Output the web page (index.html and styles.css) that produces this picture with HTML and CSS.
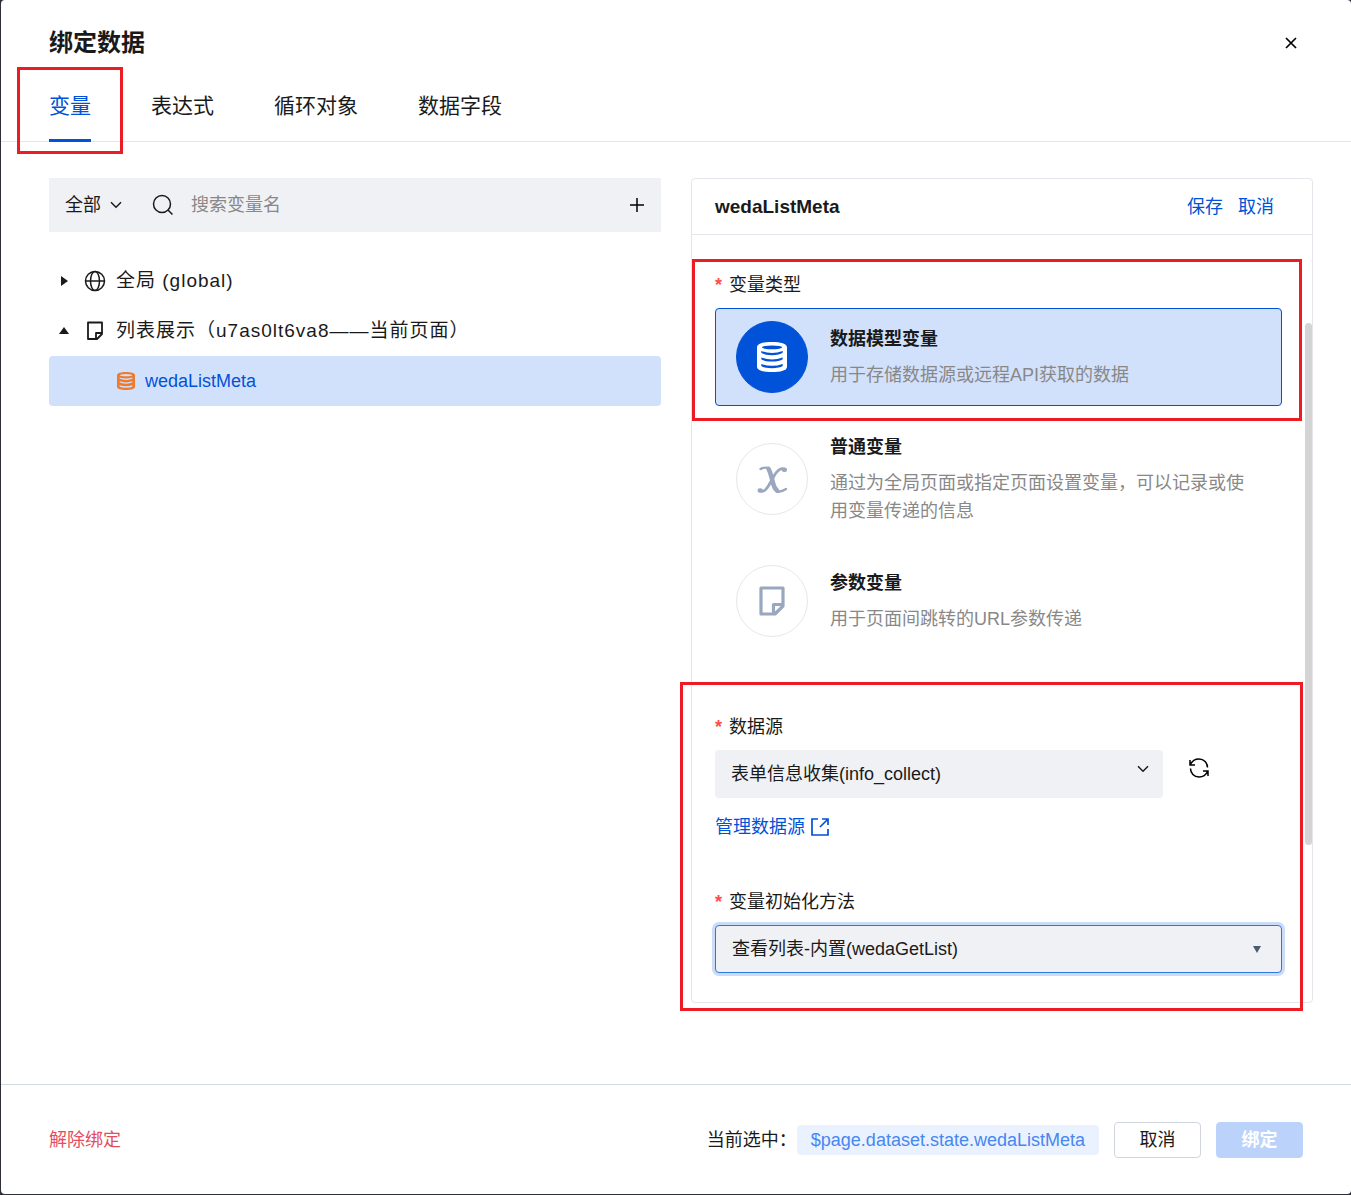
FILE: index.html
```html
<!DOCTYPE html>
<html lang="zh-CN">
<head>
    <meta charset="UTF-8">
    <meta name="viewport" content="width=device-width, initial-scale=1.0">
    <title>绑定数据</title>
    <link rel="stylesheet" href="styles.css">
</head>
<body>

    <!-- Shared icons -->
    <svg class="sprite" aria-hidden="true">
        <symbol id="icon-down" viewBox="0 0 12 8">
            <path d="M1 1.2l5 5 5-5" fill="none" stroke="currentColor" stroke-width="1.5" />
        </symbol>
        <symbol id="icon-db" viewBox="0 0 28 28">
            <path d="M14 0C6 0 0 1.500 0 5v18c0 3.500 6 5 14 5s14-1.500 14-5V5c0-3.500-6-5-14-5z" fill="currentColor" />
            <g class="db-lines">
                <ellipse cx="14" cy="5" rx="9.500" ry="1.700" />
                <path d="M4 8.500q10 3.500 20 0v1.500q-3 2.300-10 2.300T4 10z" />
                <path d="M4 14.500q10 3.500 20 0v1.500q-3 2.300-10 2.300T4 16z" />
                <path d="M4 20.500q10 3.500 20 0v2q-3 2-10 2T4 22.500z" />
            </g>
        </symbol>
        <symbol id="icon-page" viewBox="0 0 26 30">
            <path d="M2 2h22v18l-8 8H2zM24 18.500H14.500V28" fill="none" stroke="currentColor" stroke-width="3.200" stroke-linejoin="round" />
        </symbol>
    </svg>

    <div class="dialog">
        <header class="dialog-header">
            <h1>绑定数据</h1>
            <button type="button" class="icon-btn" aria-label="关闭">
                <svg width="12" height="12" viewBox="0 0 12 12"><path d="M1 1l10 10M11 1L1 11" stroke="currentColor" stroke-width="1.700" /></svg>
            </button>
        </header>

        <nav class="tabs">
            <a href="#" class="tab active">变量<span class="marker marker-tab"></span></a>
            <a href="#" class="tab">表达式</a>
            <a href="#" class="tab">循环对象</a>
            <a href="#" class="tab">数据字段</a>
        </nav>

        <main class="dialog-body">
            <!-- Variable list -->
            <section class="variables">
                <div class="search-bar">
                    <div class="scope">
                        <select aria-label="范围">
                            <option>全部</option>
                        </select>
                        <svg width="12" height="8"><use href="#icon-down" /></svg>
                    </div>
                    <svg class="search-icon" width="22" height="22" viewBox="0 0 22 22" fill="none" stroke="currentColor" stroke-width="1.5">
                        <circle cx="10" cy="10" r="8.500" /><path d="M16 16l4.500 4.500" />
                    </svg>
                    <input type="text" placeholder="搜索变量名" aria-label="搜索变量名">
                    <button type="button" class="icon-btn" aria-label="新增变量">
                        <svg width="16" height="16" viewBox="0 0 16 16"><path d="M8 1v14M1 8h14" stroke="currentColor" stroke-width="1.5" /></svg>
                    </button>
                </div>

                <ul class="tree">
                    <li class="tree-row">
                        <svg class="caret" width="10" height="10" viewBox="0 0 10 10"><path d="M2 0l7 5-7 5z" fill="currentColor" /></svg>
                        <svg class="node-icon" width="22" height="22" viewBox="0 0 22 22" fill="none" stroke="currentColor" stroke-width="1.500">
                            <circle cx="11" cy="11" r="9.500" /><ellipse cx="11" cy="11" rx="4.500" ry="9.500" /><path d="M1.500 11h19" />
                        </svg>
                        <span>全局 (global)</span>
                    </li>
                    <li class="tree-row">
                        <svg class="caret" width="10" height="10" viewBox="0 0 10 10"><path d="M0 8l5-7 5 7z" fill="currentColor" /></svg>
                        <svg class="node-icon" width="22" height="20" viewBox="0 0 22 20" fill="none" stroke="currentColor" stroke-width="1.800" stroke-linejoin="round">
                            <path d="M4 1.500h14v11.500l-5 5H4zM18 12h-6v6" />
                        </svg>
                        <span>列表展示（u7as0lt6va8——当前页面）</span>
                    </li>
                    <li class="tree-row selected">
                        <svg width="18" height="18"><use href="#icon-db" /></svg>
                        <a href="#">wedaListMeta</a>
                    </li>
                </ul>
            </section>

            <!-- Variable editor -->
            <form class="panel">
                <div class="panel-header">
                    <h2>wedaListMeta</h2>
                    <button type="button" class="link-btn">保存</button>
                    <button type="button" class="link-btn">取消</button>
                </div>

                <div class="panel-body">
                    <fieldset class="type-field">
                        <legend class="field-label required">变量类型</legend>
                        <div class="type-list">
                            <label class="type-card checked">
                                <input type="radio" name="type" checked>
                                <span class="type-icon"><svg width="30" height="30"><use href="#icon-db" /></svg></span>
                                <span class="type-text">
                                    <strong>数据模型变量</strong>
                                    <span>用于存储数据源或远程API获取的数据</span>
                                </span>
                                <span class="marker marker-type"></span>
                            </label>
                            <label class="type-card">
                                <input type="radio" name="type">
                                <span class="type-icon">
                                    <svg width="32" height="30" viewBox="0 0 32 30" fill="none" stroke="currentColor" stroke-linecap="round">
                                        <path d="M4.500 5C7 3.500 10 3.500 12 4" stroke-width="2.400" />
                                        <path d="M12.500 5c2 3 3.500 10 4.500 14 1 4 2 6 4 7.500" stroke-width="4.600" />
                                        <path d="M21 27.500c3 .7 6-.5 9-2.500" stroke-width="2.400" />
                                        <path d="M28 5c-4-1.500-7 2-10 7l-5 9c-3 5-5 7-8.500 6" stroke-width="2.800" />
                                        <path d="M28 5.700h.8M3.800 26.500h.8" stroke-width="4.600" />
                                    </svg>
                                </span>
                                <span class="type-text">
                                    <strong>普通变量</strong>
                                    <span>通过为全局页面或指定页面设置变量，可以记录或使用变量传递的信息</span>
                                </span>
                            </label>
                            <label class="type-card">
                                <input type="radio" name="type">
                                <span class="type-icon"><svg width="26" height="30"><use href="#icon-page" /></svg></span>
                                <span class="type-text">
                                    <strong>参数变量</strong>
                                    <span>用于页面间跳转的URL参数传递</span>
                                </span>
                            </label>
                        </div>
                    </fieldset>

                    <div class="source-fields">
                        <label class="field-label required" for="source">数据源</label>
                        <div class="source-row">
                            <div class="select-box">
                                <select id="source">
                                    <option>表单信息收集(info_collect)</option>
                                </select>
                                <svg class="select-arrow" width="12" height="8"><use href="#icon-down" /></svg>
                            </div>
                            <button type="button" class="icon-btn refresh" aria-label="刷新">
                                <svg width="20" height="20" viewBox="0 0 20 20" fill="none" stroke="currentColor" stroke-width="1.500">
                                    <path d="M1 2v5h5M1.500 6.500C3 3 6 1 10 1c5 0 8.500 4 8.500 8.500M19 18v-5h-5M18.500 13.500C17 17 14 19 10 19c-5 0-8.500-4-8.500-8.500" />
                                </svg>
                            </button>
                        </div>
                        <a href="#" class="manage-link">管理数据源
                            <svg width="20" height="20" viewBox="0 0 20 20" fill="none" stroke="currentColor" stroke-width="1.700">
                                <path d="M8 2H2v16h16v-6M12 2h6v6M18 2l-8 8" />
                            </svg>
                        </a>
                        <label class="field-label required" for="method">变量初始化方法</label>
                        <div class="select-box focused">
                            <select id="method">
                                <option>查看列表-内置(wedaGetList)</option>
                            </select>
                            <svg class="select-arrow" width="8" height="8" viewBox="0 0 8 8"><path d="M0 0h8L4 7z" fill="currentColor" /></svg>
                        </div>
                        <span class="marker marker-source"></span>
                    </div>
                </div>
                <span class="scroll-thumb"></span>
            </form>
        </main>

        <footer class="dialog-footer">
            <button type="button" class="unbind">解除绑定</button>
            <span>当前选中：</span>
            <code>$page.dataset.state.wedaListMeta</code>
            <button type="button" class="btn">取消</button>
            <button type="button" class="btn btn-primary" disabled>绑定</button>
        </footer>
    </div>

</body>
</html>
```
FILE: styles.css
```css
/* --- General --- */
* {
    box-sizing: border-box;
}

body {
    margin: 0;
    background-color: #2f2f39;
    color: #1a1a1a;
    font-family: "Liberation Sans", "Noto Sans CJK SC", sans-serif;
    font-size: 18px;
    line-height: 28px;
}

h1, h2, ul, fieldset, legend {
    margin: 0;
    padding: 0;
}

a {
    color: #0052d9;
    text-decoration: none;
}

button, input, select, code {
    font: inherit;
    color: inherit;
}

button {
    padding: 0;
    border: none;
    background: none;
    cursor: pointer;
}

select {
    appearance: none;
    border: none;
    background: none;
}

svg {
    display: block;
    flex: none;
}

.sprite {
    position: absolute;
    width: 0;
    height: 0;
}

.icon-btn {
    display: flex;
    align-items: center;
    justify-content: center;
    width: 24px;
    height: 24px;
    color: #000;
}

/* Red callout frames */
.marker {
    position: absolute;
    z-index: 5;
    border: 3px solid #ed1c24;
    pointer-events: none;
}

/* --- Dialog --- */
.dialog {
    display: flex;
    flex-direction: column;
    min-height: calc(100vh - 1px);
    margin: 0 0 1px 1px;
    background-color: #fff;
    border-radius: 4px;
}

.dialog-header {
    display: flex;
    align-items: center;
    justify-content: space-between;
    padding: 27px 48px 11px;
}

h1 {
    font-size: 24px;
    line-height: 32px;
}

.tabs {
    display: flex;
    gap: 60px;
    padding: 0 48px;
    box-shadow: inset 0 -1px #e3e6eb;
}

.tab {
    position: relative;
    color: #1a1a1a;
    font-size: 21px;
    line-height: 72px;
}

.tab.active {
    color: #0052d9;
    box-shadow: inset 0 -3px #0052d9;
}

.marker-tab {
    inset: -3px -32px -12px;
}

.dialog-body {
    flex: 1;
    display: grid;
    grid-template-columns: 612fr 622fr;
    align-items: start;
    gap: 30px;
    padding: 36px 38px 80px 48px;
}

/* --- Variable list --- */
.search-bar {
    display: flex;
    align-items: center;
    height: 54px;
    margin-bottom: 24px;
    padding: 0 12px 0 16px;
    background-color: #f0f1f5;
}

.scope {
    display: flex;
    align-items: center;
    gap: 9px;
}

.scope select {
    padding: 0;
}

.search-icon {
    margin: 0 17px 0 30px;
}

.search-bar input {
    flex: 1;
    min-width: 0;
    padding: 0;
    border: none;
    background: none;
}

.search-bar input::placeholder {
    color: #888;
}

.tree {
    list-style: none;
}

.tree-row {
    display: flex;
    align-items: center;
    height: 50px;
    padding: 0 10px;
    font-size: 19px;
    letter-spacing: 1px;
}

.node-icon {
    margin: 0 10px 0 15px;
}

.tree-row.selected {
    gap: 10px;
    padding-left: 68px;
    border-radius: 4px;
    background-color: #d2e1fb;
    color: #ed7b2f;
    font-size: 18px;
    letter-spacing: normal;
}

.db-lines {
    fill: var(--line, #d2e1fb);
}

/* --- Editor panel --- */
.panel {
    position: relative;
    border: 1px solid #e3e6eb;
    border-radius: 4px;
}

.panel-header {
    display: flex;
    align-items: center;
    gap: 15px;
    height: 56px;
    padding: 0 38px 0 23px;
    border-bottom: 1px solid #e3e6eb;
}

h2 {
    flex: 1;
    font-size: 19px;
}

.link-btn {
    color: #0052d9;
}

.panel-body {
    padding: 36px 30px 29px 23px;
}

.scroll-thumb {
    position: absolute;
    top: 144px;
    right: 0;
    bottom: 157px;
    width: 7px;
    border-radius: 4px;
    background-color: #d4d4d4;
}

.type-field {
    min-width: 0;
    border: none;
}

.field-label {
    display: block;
    margin-bottom: 9px;
}

.required::before {
    content: "*";
    margin-right: 7px;
    color: #ff4d4f;
    font-weight: bold;
}

.type-list {
    display: flex;
    flex-direction: column;
    gap: 14px;
}

.type-card {
    position: relative;
    display: flex;
    align-items: center;
    gap: 22px;
    padding: 12px 20px;
    border: 1px solid transparent;
    border-radius: 4px;
    cursor: pointer;
}

.type-card.checked {
    border-color: #0052d9;
    background-color: #d2e1fb;
}

.type-card input {
    position: absolute;
    opacity: 0;
}

.marker-type {
    inset: -50px -21px -16px -24px;
}

.type-icon {
    display: flex;
    flex: none;
    align-items: center;
    justify-content: center;
    width: 72px;
    height: 72px;
    border: 1px solid #e7e7e7;
    border-radius: 50%;
    color: #9aa8bf;
}

.checked .type-icon {
    --line: #0052d9;
    border-color: #0052d9;
    background-color: #0052d9;
    color: #fff;
}

.type-text {
    display: flex;
    flex-direction: column;
    gap: 8px;
    color: #888;
}

.type-text strong {
    color: #1a1a1a;
}

.source-fields {
    position: relative;
    margin-top: 63px;
}

.marker-source {
    inset: -31px -21px -38px -35px;
}

.source-row {
    display: flex;
    gap: 18px;
}

.select-box {
    position: relative;
}

.source-row .select-box {
    flex: 0 1 448px;
}

.select-box select {
    display: block;
    width: 100%;
    height: 48px;
    padding: 0 40px 0 16px;
    border-radius: 4px;
    background-color: #f0f1f5;
}

.select-arrow {
    position: absolute;
    top: 15px;
    right: 14px;
    pointer-events: none;
}

.select-box.focused select {
    border: 1px solid #2b78e4;
    box-shadow: 0 0 0 3px #ccdcf7;
}

.focused .select-arrow {
    top: 21px;
    right: 21px;
    color: #4b5b70;
}

.refresh {
    width: 36px;
    height: 36px;
}

.manage-link {
    display: flex;
    align-items: center;
    gap: 5px;
    margin: 15px 0 47px;
}

/* --- Footer --- */
.dialog-footer {
    display: flex;
    align-items: center;
    height: 110px;
    padding: 0 48px;
    border-top: 1px solid #d5d9e0;
}

.unbind {
    margin-right: auto;
    color: #e54d5c;
}

.dialog-footer code {
    padding: 1px 14px;
    border-radius: 4px;
    background-color: #ebf2ff;
    color: #4787f0;
}

.btn {
    width: 87px;
    height: 36px;
    margin-left: 15px;
    border: 1px solid #d0d5de;
    border-radius: 4px;
}

.btn-primary {
    border-color: #bbd3fb;
    background-color: #bbd3fb;
    color: #fff;
    font-weight: bold;
}
```
